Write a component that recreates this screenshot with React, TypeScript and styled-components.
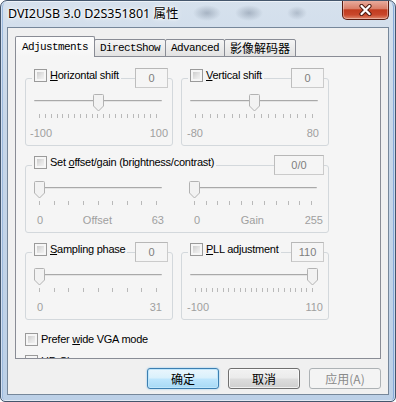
import React from 'react';
import styled, { createGlobalStyle } from 'styled-components';

const UI = `"Liberation Sans", Arial, "Noto Sans CJK SC", sans-serif`;
const CJK = `"Noto Sans CJK SC", "Liberation Sans", sans-serif`;
const TITLE = `"Noto Sans", "Noto Sans CJK SC", sans-serif`;
const MONO = `"Liberation Mono", "Noto Sans CJK SC", monospace`;
const PANEL = '#f5f5f5';

const GlobalStyle = createGlobalStyle`
  html, body { margin: 0; padding: 0; background: #ffffff; }
  body { width: 396px; height: 402px; overflow: hidden; }
  #root { width: 396px; height: 402px; }
`;

const Window = styled.div`
  width: 396px;
  height: 402px;
  box-sizing: border-box;
  border: 1px solid #44566c;
  border-radius: 7px 7px 5px 5px;
  padding: 0 6px 6px 6px;
  display: flex;
  flex-direction: column;
  overflow: hidden;
  background:
    radial-gradient(ellipse 14px 8px at 206px 12px, rgba(70, 86, 108, 0.32), transparent),
    radial-gradient(ellipse 14px 8px at 248px 12px, rgba(70, 86, 108, 0.32), transparent),
    radial-gradient(ellipse 10px 7px at 296px 12px, rgba(70, 86, 108, 0.26), transparent),
    linear-gradient(to bottom, #d6e1ed 0%, #c8d7e8 30%, #bcd0e7 100%);
  box-shadow: inset 0 0 0 1px rgba(255, 255, 255, 0.55), inset 3px 0 0 -1px #9dbbdf, inset -3px 0 0 -1px #86a9d8;
`;

const TitleBar = styled.div`
  height: 26px;
  display: flex;
  justify-content: space-between;
  align-items: flex-start;
`;

const Title = styled.div`
  margin: 5px 0 0 1px;
  font: 12.5px/16px ${TITLE};
  color: #000;
  text-shadow: 0 0 6px #fff, 0 0 3px #fff, 0 0 2px #fff;
  white-space: nowrap;
`;

const CloseButton = styled.div`
  width: 47px;
  height: 20px;
  margin-top: -1px;
  box-sizing: border-box;
  border: 1px solid #5a1c10;
  border-top: none;
  border-radius: 0 0 5px 5px;
  background: linear-gradient(to bottom, #eab1a3 0%, #da7f69 45%, #c23c1f 52%, #c9472b 78%, #e08a6e 100%);
  box-shadow: inset 0 0 0 1px rgba(255, 255, 255, 0.35);
  display: flex;
  align-items: center;
  justify-content: center;
`;

const Client = styled.div`
  flex: 1;
  border: 1px solid #76879a;
  background: #f0f0f0;
  display: flex;
  flex-direction: column;
  padding: 8px 7px 5px 7px;
`;

const TabRow = styled.div`
  display: flex;
  align-items: flex-end;
  height: 21px;
  margin-bottom: -1px;
  position: relative;
  z-index: 2;
`;

const Tab = styled.div<{ $active?: boolean; $cjk?: boolean }>`
  box-sizing: border-box;
  height: ${(p) => (p.$active ? 21 : 18)}px;
  padding: 0 ${(p) => (p.$active ? 6 : 5)}px;
  margin-left: ${(p) => (p.$active ? 0 : -1)}px;
  border: 1px solid #898c95;
  border-bottom: ${(p) => (p.$active ? 'none' : '1px solid #898c95')};
  border-radius: 2px 2px 0 0;
  background: ${(p) =>
    p.$active ? `linear-gradient(to bottom, #fdfdfd, ${PANEL})` : 'linear-gradient(to bottom, #f5f5f5, #e2e2e2)'};
  display: flex;
  align-items: center;
  font: ${(p) => (p.$cjk ? `12px/14px ${CJK}` : `11px/14px ${MONO}`)};
  letter-spacing: ${(p) => (p.$cjk ? '0' : '-0.6px')};
  color: #000;
  white-space: nowrap;
  position: relative;
  z-index: ${(p) => (p.$active ? 2 : 1)};
`;

const Panel = styled.div`
  height: 303px;
  box-sizing: border-box;
  border: 1px solid #898c95;
  background: ${PANEL};
  overflow: hidden;
  padding: 11px 0 0 9px;
  display: flex;
  flex-direction: column;
  position: relative;
  z-index: 1;
`;

const GroupGrid = styled.div`
  display: grid;
  grid-template-columns: 148px 148px;
  column-gap: 8px;
  row-gap: 9px;
`;

const Group = styled.div<{ $wide?: boolean }>`
  display: grid;
  grid-column: ${(p) => (p.$wide ? '1 / -1' : 'auto')};
  & > * {
    grid-area: 1 / 1;
  }
`;

const Frame = styled.div<{ $split?: boolean }>`
  margin-top: 10px;
  height: 68px;
  box-sizing: border-box;
  border: 1px solid #d3d8dc;
  border-radius: 3px;
  display: grid;
  grid-template-columns: ${(p) => (p.$split ? '147px 147px' : '1fr')};
  column-gap: 8px;
`;

const Header = styled.div`
  align-self: start;
  height: 20px;
  display: flex;
  justify-content: space-between;
  padding: 0 5px 0 7px;
  position: relative;
  z-index: 1;
`;

const HeaderLabel = styled.label`
  align-self: flex-start;
  margin-top: 1px;
  padding: 0 2px;
  background: ${PANEL};
  display: flex;
  align-items: center;
  gap: 3px;
  height: 13px;
  font: 11px/13px ${UI};
  letter-spacing: -0.25px;
  color: #000;
  white-space: nowrap;
`;

const CheckBox = styled.span`
  width: 13px;
  height: 13px;
  box-sizing: border-box;
  border: 1px solid #9a9a9a;
  background: #f6f6f6;
  padding: 2px;
  display: flex;
  flex: none;
`;

const CheckFill = styled.span`
  flex: 1;
  background: linear-gradient(135deg, #cdcdcd 0%, #e6e6e6 60%, #f1f1f1 100%);
`;

const ValueBox = styled.div<{ $w: number }>`
  width: ${(p) => p.$w}px;
  height: 20px;
  box-sizing: border-box;
  border: 1px solid #cbcbcb;
  border-top-color: #b7b7b7;
  border-left-color: #bdbdbd;
  background: ${PANEL};
  font: 11px/18px ${UI};
  color: #7e7e7e;
  text-align: center;
`;

const SliderBlock = styled.div`
  padding-top: 15px;
  display: flex;
  flex-direction: column;
`;

const SliderBox = styled.div`
  position: relative;
  width: 128px;
  height: 17px;
  margin-left: 8px;
`;

const Track = styled.div`
  margin-top: 6px;
  height: 0;
  border-top: 1px solid #a9a9a9;
  border-bottom: 1px solid #e4e4e4;
  border-radius: 1px;
`;

const Thumb = styled.div`
  position: absolute;
  top: 0;
  width: 11px;
  height: 18px;
`;

const TickRow = styled.div`
  width: 128px;
  box-sizing: border-box;
  margin: 3px 0 0 8px;
  padding: 0 5px;
  height: 4px;
  display: flex;
  justify-content: space-between;
`;

const Tick = styled.span`
  width: 1px;
  height: 4px;
  background: #b9b9b9;
`;

const LabelRow = styled.div<{ $pl: number; $pr: number }>`
  margin-top: 9px;
  padding: 0 ${(p) => p.$pr}px 0 ${(p) => p.$pl}px;
  display: flex;
  justify-content: space-between;
  font: 11px/13px ${UI};
  color: #9f9f9f;
`;

const CheckRow = styled.label<{ $mt: number }>`
  margin-top: ${(p) => p.$mt}px;
  display: flex;
  align-items: center;
  gap: 3px;
  height: 13px;
  flex: none;
  font: 11px/13px ${UI};
  letter-spacing: -0.25px;
  color: #000;
  white-space: nowrap;
`;

const ButtonRow = styled.div`
  margin-top: 9px;
  display: flex;
  justify-content: flex-end;
  gap: 9px;
`;

const Button = styled.button<{ $kind: 'default' | 'normal' | 'disabled' }>`
  width: 72px;
  height: 21px;
  box-sizing: border-box;
  padding: 0;
  border-radius: 3px;
  font: 12px/19px ${CJK};
  display: flex;
  align-items: center;
  justify-content: center;
  border: 1px solid
    ${(p) => (p.$kind === 'default' ? '#3c7fb1' : p.$kind === 'normal' ? '#707070' : '#adb2b5')};
  color: ${(p) => (p.$kind === 'disabled' ? '#8a8a8a' : '#000')};
  background: ${(p) =>
    p.$kind === 'default'
      ? 'linear-gradient(to bottom, #eaf6fd 0%, #d9f0fc 48%, #bee6fd 52%, #a7d9f5 100%)'
      : p.$kind === 'normal'
      ? 'linear-gradient(to bottom, #f2f2f2 0%, #ebebeb 48%, #dddddd 52%, #cfcfcf 100%)'
      : '#f4f4f4'};
  box-shadow: ${(p) =>
    p.$kind === 'default'
      ? 'inset 0 0 0 1px #bfe6fb, 0 0 2px #7fc1ee'
      : p.$kind === 'normal'
      ? 'inset 0 0 0 1px rgba(255,255,255,0.7)'
      : 'none'};
`;

const ThumbIcon = () => (
  <svg width="11" height="18" viewBox="0 0 11 18">
    <path
      d="M1.5 0.5 H9.5 Q10.5 0.5 10.5 1.5 V12 L5.5 17 L0.5 12 V1.5 Q0.5 0.5 1.5 0.5 Z"
      fill="#f2f2f2"
      stroke="#b2b2b2"
    />
  </svg>
);

const CloseIcon = () => (
  <svg width="13" height="12" viewBox="0 0 13 12">
    <path d="M2.5 2 L10.5 10 M10.5 2 L2.5 10" stroke="#4c1a10" strokeWidth="4.2" strokeLinecap="round" />
    <path d="M2.5 2 L10.5 10 M10.5 2 L2.5 10" stroke="#ffffff" strokeWidth="2.3" strokeLinecap="round" />
  </svg>
);

type SliderSpec = {
  ticks: number;
  pos: number;
  labels: string[];
  pl: number;
  pr: number;
};

const Slider = ({ ticks, pos, labels, pl, pr }: SliderSpec) => (
  <SliderBlock>
    <SliderBox>
      <Track />
      <Thumb style={{ left: `${Math.round(pos * (128 - 11))}px` }}>
        <ThumbIcon />
      </Thumb>
    </SliderBox>
    <TickRow>
      {Array.from({ length: ticks }).map((_, i) => (
        <Tick key={i} />
      ))}
    </TickRow>
    <LabelRow $pl={pl} $pr={pr}>
      {labels.map((l) => (
        <span key={l}>{l}</span>
      ))}
    </LabelRow>
  </SliderBlock>
);

const Check = () => (
  <CheckBox>
    <CheckFill />
  </CheckBox>
);

type GroupSpec = {
  label: React.ReactNode;
  value: string;
  valueWidth: number;
  wide?: boolean;
  sliders: SliderSpec[];
};

const groups: GroupSpec[] = [
  {
    label: (
      <span>
        <u>H</u>orizontal shift
      </span>
    ),
    value: '0',
    valueWidth: 33,
    sliders: [{ ticks: 21, pos: 0.5, labels: ['-100', '100'], pl: 4, pr: 4 }],
  },
  {
    label: (
      <span>
        <u>V</u>ertical shift
      </span>
    ),
    value: '0',
    valueWidth: 33,
    sliders: [{ ticks: 17, pos: 0.5, labels: ['-80', '80'], pl: 5, pr: 9 }],
  },
  {
    label: (
      <span>
        Set <u>o</u>ffset/gain (brightness/contrast)
      </span>
    ),
    value: '0/0',
    valueWidth: 50,
    wide: true,
    sliders: [
      { ticks: 9, pos: 0, labels: ['0', 'Offset', '63'], pl: 11, pr: 9 },
      { ticks: 11, pos: 0, labels: ['0', 'Gain', '255'], pl: 13, pr: 5 },
    ],
  },
  {
    label: (
      <span>
        <u>S</u>ampling phase
      </span>
    ),
    value: '0',
    valueWidth: 33,
    sliders: [{ ticks: 9, pos: 0, labels: ['0', '31'], pl: 11, pr: 10 }],
  },
  {
    label: (
      <span>
        <u>P</u>LL adjustment
      </span>
    ),
    value: '110',
    valueWidth: 33,
    sliders: [{ ticks: 22, pos: 1, labels: ['-100', '110'], pl: 5, pr: 5 }],
  },
];

export default function App() {
  return (
    <>
      <GlobalStyle />
      <Window>
        <TitleBar>
          <Title>DVI2USB 3.0 D2S351801 属性</Title>
          <CloseButton>
            <CloseIcon />
          </CloseButton>
        </TitleBar>
        <Client>
          <TabRow>
            <Tab $active>Adjustments</Tab>
            <Tab>DirectShow</Tab>
            <Tab>Advanced</Tab>
            <Tab $cjk>影像解码器</Tab>
          </TabRow>
          <Panel>
            <GroupGrid>
              {groups.map((g, i) => (
                <Group key={i} $wide={g.wide}>
                  <Frame $split={g.sliders.length > 1}>
                    {g.sliders.map((s, j) => (
                      <Slider key={j} {...s} />
                    ))}
                  </Frame>
                  <Header>
                    <HeaderLabel>
                      <Check />
                      {g.label}
                    </HeaderLabel>
                    <ValueBox $w={g.valueWidth}>{g.value}</ValueBox>
                  </Header>
                </Group>
              ))}
            </GroupGrid>
            <CheckRow $mt={13}>
              <Check />
              <span>
                Prefer <u>w</u>ide VGA mode
              </span>
            </CheckRow>
            <CheckRow $mt={9}>
              <Check />
              <span>
                <u>H</u>D Clamp
              </span>
            </CheckRow>
          </Panel>
          <ButtonRow>
            <Button $kind="default">确定</Button>
            <Button $kind="normal">取消</Button>
            <Button $kind="disabled">应用(A)</Button>
          </ButtonRow>
        </Client>
      </Window>
    </>
  );
}
